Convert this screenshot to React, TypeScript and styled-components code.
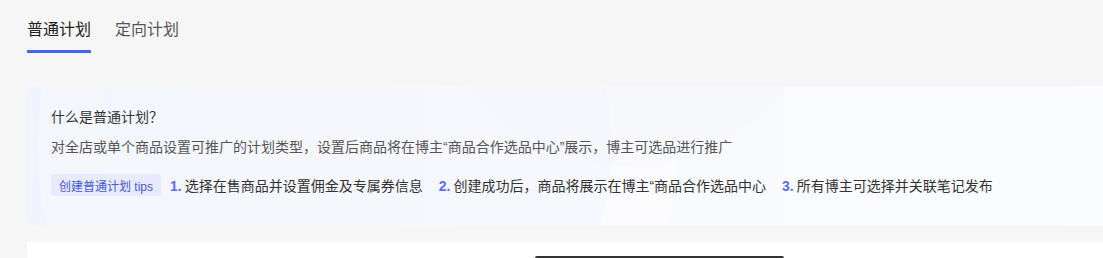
import React, { ReactElement } from "react";
import styled, { createGlobalStyle } from "styled-components";

const GlobalStyle = createGlobalStyle`
  html, body {
    margin: 0;
    padding: 0;
    background: #f6f6f6;
    font-family: "Liberation Sans", "Noto Sans CJK SC", sans-serif;
    overflow: hidden;
  }
`;

const Page = styled.div`
  display: flex;
  flex-direction: column;
  padding: 18px 0 0 27px;
`;

const TabBar = styled.div`
  display: flex;
  gap: 24px;
  height: 35px;
`;

const Tab = styled.div<{ $active?: boolean }>`
  position: relative;
  font-size: 16px;
  line-height: 24px;
  color: ${(p) => (p.$active ? "#222" : "#555")};
  cursor: pointer;
  &::after {
    content: "";
    display: ${(p) => (p.$active ? "block" : "none")};
    position: absolute;
    left: 0;
    right: 0;
    bottom: 0;
    height: 3px;
    background: #4166f5;
  }
`;

const IntroCard = styled.section`
  position: relative;
  overflow: hidden;
  margin-top: 33px;
  padding: 20px 24px 30px;
  border-radius: 8px 0 0 8px;
  background: linear-gradient(90deg, #f1f3fd 0%, #f8f9fe 40%, #fbfcff 100%);
`;

const Decoration = styled.svg`
  position: absolute;
  left: 0;
  top: 0;
  pointer-events: none;
`;

const Body = styled.div`
  position: relative;
  display: flex;
  flex-direction: column;
`;

const Title = styled.h3`
  margin: 0;
  font-size: 14px;
  font-weight: 400;
  line-height: 22px;
  color: #333;
`;

const Desc = styled.p`
  margin: 8px 0 0;
  font-size: 14px;
  line-height: 22px;
  color: #555;
`;

const Steps = styled.div`
  display: flex;
  align-items: center;
  margin-top: 16px;
  height: 22px;
`;

const Tag = styled.span`
  display: inline-flex;
  align-items: center;
  height: 22px;
  padding: 0 8px;
  margin-right: 9px;
  border-radius: 4px;
  background: #e7ebfd;
  color: #4a57cf;
  font-size: 12px;
`;

const Step = styled.span`
  font-size: 14px;
  color: #333;
  margin-right: 16px;
  white-space: nowrap;
`;

const StepNo = styled.b`
  color: #5b6cf2;
  font-weight: 700;
  margin-right: 3px;
`;

const ContentCard = styled.section`
  margin-top: 16px;
  height: 2px;
  background: #fff;
  padding: 14px 0 0 508px;
`;

const DarkBar = styled.div`
  width: 249px;
  height: 2px;
  border-radius: 4px 4px 0 0;
  background: #333;
`;

const steps = [
  "选择在售商品并设置佣金及专属券信息",
  "创建成功后，商品将展示在博主“商品合作选品中心",
  "所有博主可选择并关联笔记发布",
];

export default function App(): ReactElement {
  return (
    <Page>
      <GlobalStyle />
      <TabBar>
        <Tab $active>普通计划</Tab>
        <Tab>定向计划</Tab>
      </TabBar>
      <IntroCard>
        <Decoration width="1100" height="140" viewBox="0 0 1100 140">
          <circle cx="330" cy="60" r="320" fill="#ffffff" opacity="0.3" />
          <circle cx="330" cy="60" r="255" fill="#f1f3fd" opacity="0.45" />
          <circle cx="600" cy="-120" r="200" fill="#f3f5fd" opacity="0.35" />
        </Decoration>
        <Body>
          <Title>什么是普通计划？</Title>
          <Desc>
            对全店或单个商品设置可推广的计划类型，设置后商品将在博主“商品合作选品中心”展示，博主可选品进行推广
          </Desc>
          <Steps>
            <Tag>创建普通计划 tips</Tag>
            {steps.map((s, i) => (
              <Step key={s}>
                <StepNo>{i + 1}.</StepNo>
                {s}
              </Step>
            ))}
          </Steps>
        </Body>
      </IntroCard>
      <ContentCard>
        <DarkBar />
      </ContentCard>
    </Page>
  );
}
